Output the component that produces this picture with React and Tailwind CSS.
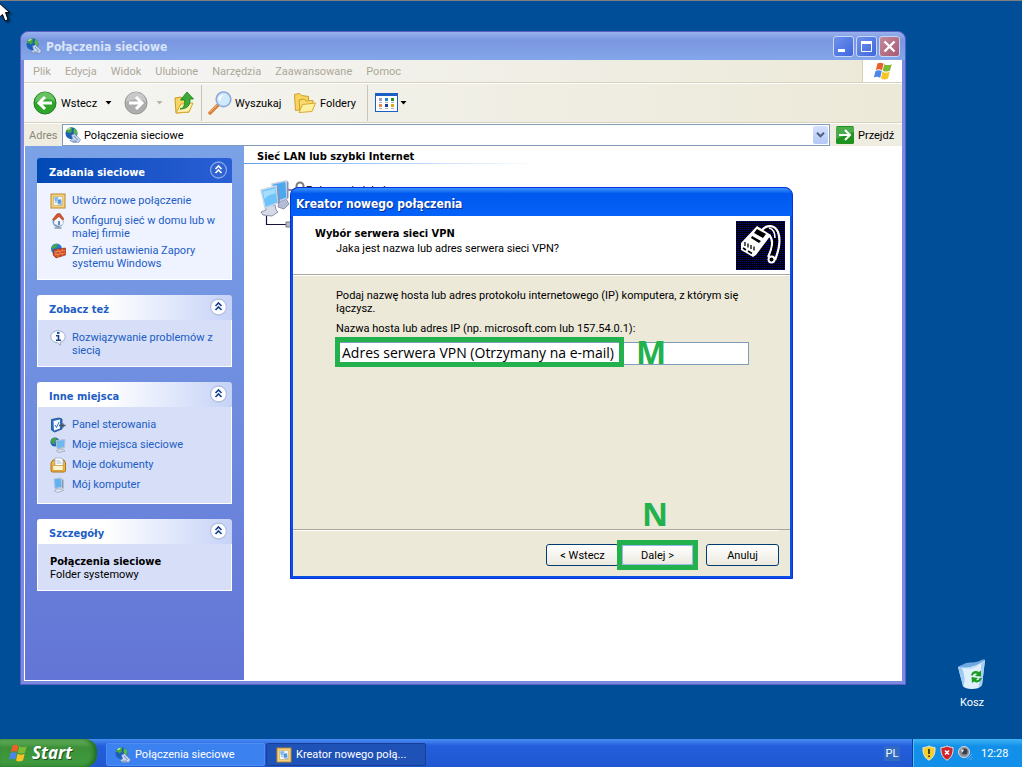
import React from "react";

const menuItems = ["Plik", "Edycja", "Widok", "Ulubione", "Narzędzia", "Zaawansowane", "Pomoc"];

const App = () => {
  return (
    <div className="h-screen min-h-[767px] flex flex-col overflow-hidden bg-[#004e98] border-t border-[#808080] font-[Roboto,sans-serif] text-[11px] leading-[13px] text-black select-none">
      <main className="relative flex-1">
        <ExplorerWindow />
        <WizardDialog />
        <RecycleBin />
        <Cursor />
      </main>
      <Taskbar />
    </div>
  );
};

const ExplorerWindow = () => {
  return (
    <section className="absolute left-5 top-[30px] right-[116px] bottom-[54px] flex flex-col rounded-t-lg border border-[#5a5fc4] bg-[#7a8ae0] px-[3px] pb-[3px]">
      <header className="flex h-7 items-center gap-1 -mx-[3px] rounded-t-lg bg-linear-to-b from-[#98b2ee] via-[#7a96df] via-30% to-[#83a6ea] pl-[5px] pr-[5px]">
        <NetworkIcon className="size-4" />
        <h1 className="grow pt-0.5 font-[DejaVu_Sans_Condensed,sans-serif] text-[12px] font-bold leading-4 text-[#d8e4f8]">Połączenia sieciowe</h1>
        <div className="flex gap-0.5">
          <CaptionButton label="Minimalizuj" kind="min" />
          <CaptionButton label="Maksymalizuj" kind="max" />
          <CaptionButton label="Zamknij" kind="close" />
        </div>
      </header>
      <MenuBar />
      <Toolbar />
      <AddressBar />
      <div className="flex grow border-l border-b border-white bg-white">
        <Sidebar />
        <Connections />
      </div>
    </section>
  );
};

const CaptionButton = ({ label, kind }) => {
  return (
    <button
      aria-label={label}
      className={
        kind === "close"
          ? "flex size-[21px] items-center justify-center rounded-[3px] border border-[#c9d6f6] bg-linear-to-br from-[#c28a9e] to-[#a95a70]"
          : "flex size-[21px] items-center justify-center rounded-[3px] border border-[#c9d6f6] bg-linear-to-br from-[#6f92ec] to-[#3f66dc]"
      }
    >
      <svg viewBox="0 0 19 19" className="size-[19px]" fill="none" stroke="#fff">
        {kind === "min" && <path d="M4 13.500h7" strokeWidth="3" />}
        {kind === "max" && <path d="M4.500 4v10.500h10V4" />}
        {kind === "max" && <path d="M4 5.500h11" strokeWidth="3" />}
        {kind === "close" && <path d="M4.500 4.500l10 10M14.500 4.500l-10 10" strokeWidth="2.400" />}
      </svg>
    </button>
  );
};

const MenuBar = () => {
  return (
    <nav className="flex h-[23px] items-stretch border-b border-[#d8d2bd] bg-linear-to-r from-[#f6f6f8] to-[#ece9d8]">
      <ul className="flex grow items-center gap-3.5 pl-[9px] text-[#aca899]">
        {menuItems.map((item) => (
          <li key={item}>
            <button>{item}</button>
          </li>
        ))}
      </ul>
      <div className="flex w-10 items-center justify-center border-l border-[#d8d2bd] bg-white">
        <WindowsFlag className="size-5" />
      </div>
    </nav>
  );
};

const DropArrow = ({ className }) => (
  <svg viewBox="0 0 7 4" className={"h-1 w-[7px] " + className} fill="currentColor">
    <path d="M.5 0h6L3.500 3.500z" />
  </svg>
);

const Toolbar = () => {
  return (
    <div className="flex h-10 items-center border-t border-b border-t-white border-b-[#d8d2bd] bg-linear-to-r from-[#f5f5f3] to-[#ece9d8] pl-[9px]">
      <button className="flex items-center gap-1">
        <BackIcon />
        <span className="w-10 text-left">Wstecz</span>
        <DropArrow className="text-black" />
      </button>
      <button aria-label="Dalej" className="ml-3 flex items-center gap-2">
        <ForwardIcon />
        <DropArrow className="text-[#b8b5a8]" />
      </button>
      <button aria-label="Do góry" className="ml-2.5">
        <UpFolderIcon />
      </button>
      <div className="ml-1.5 h-9 w-px bg-[#c9c5b2]" />
      <button className="ml-1.5 flex items-center gap-[3px]">
        <SearchIcon />
        <span className="w-[58px] text-left">Wyszukaj</span>
      </button>
      <button className="flex items-center gap-[3px]">
        <FoldersIcon />
        <span className="w-[47px] text-left">Foldery</span>
      </button>
      <div className="h-9 w-px bg-[#c9c5b2]" />
      <button aria-label="Widoki" className="ml-[7px] flex items-center gap-px">
        <ViewsIcon />
        <DropArrow className="text-black" />
      </button>
    </div>
  );
};

const AddressBar = () => {
  return (
    <div className="flex h-[23px] items-stretch border-t border-white bg-[#efede1]">
      <label htmlFor="address" className="flex w-[38px] items-center pl-[5px] text-[#8b8878]">Adres</label>
      <div className="flex grow items-center border border-[#7f9db9] bg-white pl-0.5 pr-px">
        <NetworkIcon className="size-4" />
        <input id="address" className="min-w-0 grow pl-[3px] outline-none" defaultValue="Połączenia sieciowe" />
        <button aria-label="Rozwiń" className="flex h-[18px] w-[15px] items-center justify-center rounded-[2px] bg-linear-to-b from-[#d4e0fc] to-[#b4c8f6]">
          <svg viewBox="0 0 9 6" className="h-1.5 w-[9px]" fill="none" stroke="#4d6185" strokeWidth="2">
            <path d="M1 .8l3.500 3.500L8 .8" />
          </svg>
        </button>
      </div>
      <button className="flex w-[72px] items-center gap-1 pl-1.5">
        <svg viewBox="0 0 18 18" className="size-[18px]">
          <rect width="18" height="18" rx="1.500" fill="#1f921f" />
          <path d="M0 1h18v5L0 13z" fill="#6cc06c" opacity=".55" />
          <path d="M3 9h11M9 4l5 5-5 5" fill="none" stroke="#fff" strokeWidth="2" />
        </svg>
        Przejdź
      </button>
    </div>
  );
};

const Sidebar = () => {
  return (
    <aside className="flex w-[219px] flex-col gap-[15px] bg-linear-to-b from-[#7ba2e7] to-[#6375d6] px-3 pt-3">
      <Panel title="Zadania sieciowe" primary>
        <TaskLink icon={<WizardIcon />}>Utwórz nowe połączenie</TaskLink>
        <TaskLink icon={<HomeNetIcon />}>Konfiguruj sieć w domu lub w małej firmie</TaskLink>
        <TaskLink icon={<FirewallIcon />}>Zmień ustawienia Zapory systemu Windows</TaskLink>
      </Panel>
      <Panel title="Zobacz też">
        <TaskLink icon={<InfoIcon />}>Rozwiązywanie problemów z siecią</TaskLink>
      </Panel>
      <Panel title="Inne miejsca">
        <TaskLink icon={<ControlPanelIcon />}>Panel sterowania</TaskLink>
        <TaskLink icon={<PlacesIcon />}>Moje miejsca sieciowe</TaskLink>
        <TaskLink icon={<DocumentsIcon />}>Moje dokumenty</TaskLink>
        <TaskLink icon={<ComputerIcon />}>Mój komputer</TaskLink>
      </Panel>
      <Panel title="Szczegóły">
        <li className="pt-px">
          <p className="font-[DejaVu_Sans_Condensed,sans-serif] font-bold">Połączenia sieciowe</p>
          <p>Folder systemowy</p>
        </li>
      </Panel>
    </aside>
  );
};

const Panel = ({ title, primary, children }) => {
  return (
    <section>
      <header
        className={
          primary
            ? "flex h-[25px] items-center justify-between rounded-t-[3px] bg-linear-to-r from-[#0049b5] to-[#2a5fd6] pl-3 pr-1 text-white"
            : "flex h-[25px] items-center justify-between rounded-t-[3px] bg-linear-to-r from-white from-35% to-[#c6d3f7] pl-3 pr-1 text-[#215dc6]"
        }
      >
        <h2 className="pt-1 font-[DejaVu_Sans_Condensed,sans-serif] font-bold">{title}</h2>
        <button aria-label="Zwiń">
          <svg viewBox="0 0 19 19" className="size-[19px]" fill="none">
            <circle cx="9.500" cy="9" r="8" fill={primary ? "#2f63cf" : "#fff"} stroke={primary ? "#86a6ea" : "#b3bfe0"} strokeWidth="1.300" />
            <path d="M6.500 8l3-3 3 3M6.500 12l3-3 3 3" stroke={primary ? "#fff" : "#15428b"} strokeWidth="1.600" />
          </svg>
        </button>
      </header>
      <ul
        className={
          primary
            ? "flex flex-col gap-[3px] border border-t-0 border-white bg-[#eff3ff] px-3 pt-2.5 pb-[9px]"
            : "flex flex-col gap-[3px] border border-t-0 border-white bg-[#d6dff7] px-3 pt-2.5 pb-[9px]"
        }
      >
        {children}
      </ul>
    </section>
  );
};

const TaskLink = ({ icon, children }) => {
  return (
    <li>
      <a href="#" className="flex min-h-[17px] items-start gap-1.5 text-[#215dc6]">
        {icon}
        <span className="pt-px">{children}</span>
      </a>
    </li>
  );
};

const Connections = () => {
  return (
    <div className="grow">
      <h2 className="pl-[13px] pt-1 font-[DejaVu_Sans_Condensed,sans-serif] font-bold">Sieć LAN lub szybki Internet</h2>
      <div className="h-px w-[293px] bg-linear-to-r from-[#5a9cf0] to-white" />
      <div className="flex pl-3.5 pt-4">
        <LanIcon />
        <span className="pt-1">Połączenie lokalne</span>
      </div>
    </div>
  );
};

const WizardDialog = () => {
  return (
    <section role="dialog" aria-label="Kreator nowego połączenia" className="absolute left-[290px] top-[186px] flex min-h-[392px] w-[503px] flex-col rounded-t-lg border border-[#0831d9] bg-[#0a4fe8] px-0.5 pb-0.5">
      <header className="-mx-0.5 flex h-7 items-center rounded-t-lg bg-linear-to-b from-[#3d95ff] via-[#0058ee] via-20% to-[#0562f8] pl-[5px]">
        <h1 className="pt-1 font-[DejaVu_Sans_Condensed,sans-serif] text-[12px] font-bold leading-4 text-white [text-shadow:1px_1px_#0a2f8c]">Kreator nowego połączenia</h1>
      </header>
      <div className="flex h-[59px] items-start justify-between border-b border-[#aca899] bg-white pl-[22px] pr-[5px] pt-[5px]">
        <div className="pt-[5px]">
          <h2 className="font-[DejaVu_Sans_Condensed,sans-serif] font-bold leading-4">Wybór serwera sieci VPN</h2>
          <p className="pl-[21px]">Jaka jest nazwa lub adres serwera sieci VPN?</p>
        </div>
        <CableIcon />
      </div>
      <div className="grow border-t border-white bg-[#ece9d8] pl-[43px] pr-[41px] pt-[13px]">
        <p>Podaj nazwę hosta lub adres protokołu internetowego (IP) komputera, z którym się łączysz.</p>
        <label htmlFor="host" className="mt-[7px] block">Nazwa hosta lub adres IP (np. microsoft.com lub 157.54.0.1):</label>
        <div className="relative mt-[7px]">
          <input
            id="host"
            className="h-[23px] w-full border border-[#7f9db9] bg-white px-[5px] pb-0.5 font-[Open_Sans,sans-serif] text-[14px] leading-4 outline-none"
            defaultValue="Adres serwera VPN (Otrzymany na e-mail)"
          />
          <div className="absolute -left-px -top-[5px] h-[30px] w-[289px] border-[5px] border-[#22b14c]" />
          <span className="absolute left-[300px] top-0 font-[Open_Sans,sans-serif] text-[32px] font-bold leading-5 text-[#22b14c]">M</span>
        </div>
      </div>
      <footer className="flex justify-end bg-[#ece9d8] border-t border-[#aca899] pb-2.5 pr-[11px]">
        <div className="flex grow justify-end gap-3 border-t border-white pt-[13px]">
          <div className="flex gap-0.5">
            <button className="h-[22px] w-[73px] rounded-[3px] border border-[#003c74] bg-linear-to-b from-white to-[#eceadf]">&lt; Wstecz</button>
            <div className="relative">
              <button className="h-[22px] w-[73px] rounded-[3px] border-2 border-[#9db8ea] bg-linear-to-b from-white to-[#eceadf]">Dalej &gt;</button>
              <div className="absolute -left-1 -top-1 h-[30px] w-[81px] border-[5px] border-[#22b14c]" />
              <span className="absolute left-[21px] -top-10 font-[Open_Sans,sans-serif] text-[32px] font-bold leading-5 text-[#22b14c]">N</span>
            </div>
          </div>
          <button className="h-[22px] w-[73px] rounded-[3px] border border-[#003c74] bg-linear-to-b from-white to-[#eceadf]">Anuluj</button>
        </div>
      </footer>
    </section>
  );
};

const RecycleBin = () => {
  return (
    <button className="absolute bottom-[30px] right-[34px] flex w-8 flex-col items-center gap-1.5 text-white">
      <svg viewBox="0 0 32 32" className="size-8">
        <path d="M2 9C10 4 20 8 29 2l-3 25c-2 3-6 4-10 4s-8-1-9-3z" fill="#dff0fb" />
        <path d="M2 9l8-4c6-1 11 0 15-3l4-1c-4 6-19 11-27 8z" fill="#6ea9e2" />
        <path d="M4 9c7 1 14 0 20-3-5 5-13 6-20 3z" fill="#b9daf4" />
        <path d="M2 9l5 19c3-4 1-13-1-18z" fill="#9dcaf0" />
        <path d="M29 2l-3 25-4 3c3-8 3-17 3-25z" fill="#a8cff0" />
        <path d="M15 17c1-4 5-5 8-3l2-1.500 0 6-6-.5 2-2c-2-1-4 0-4.500 2zM26 20c-1 4-5 5.500-8 3.500l-2 1.500-.5-6 6.500 1-2 2c1.500.5 3 0 3.500-2z" fill="#1c9a22" />
      </svg>
      Kosz
    </button>
  );
};

const Taskbar = () => {
  return (
    <footer className="flex h-7 shrink-0 items-stretch bg-linear-to-b from-[#4a8df4] via-[#245edb] via-25% to-[#2158d2] text-white">
      <button className="flex w-[97px] items-center gap-1 rounded-r-xl bg-linear-to-b from-[#6cb465] via-[#3c9138] via-30% to-[#409c3f] pl-2 shadow-[inset_-3px_0_4px_#1f6b22]">
        <WindowsFlag className="size-5" />
        <span className="font-[Open_Sans,sans-serif] text-[17px] font-bold italic leading-5 [text-shadow:1px_1px_#1c5220]">Start</span>
      </button>
      <div className="flex grow gap-px pl-[9px] pt-1 pb-px">
        <button className="flex w-[159px] items-center gap-1 rounded-[2px] border border-[#4d8cf2] bg-[#3c81f0] pl-2">
          <NetworkIcon className="size-4" />
          Połączenia sieciowe
        </button>
        <button className="flex w-[160px] items-center gap-1 rounded-[2px] border border-[#163f95] bg-[#1e52b7] pl-[9px]">
          <WizardIcon />
          Kreator nowego połą...
        </button>
      </div>
      <div className="flex w-10 items-center justify-center">
        <span className="bg-[#316ac5] px-0.5 py-px">PL</span>
      </div>
      <div className="flex w-[110px] items-center gap-0.5 border-l border-[#0b3a9c] bg-linear-to-b from-[#3db4f5] via-[#1290e9] via-25% to-[#1290e9] pl-2 shadow-[inset_1px_0_#4cc3fa]">
        <ShieldIcon fill="#f6cf2a">
          <path d="M8 4v5M8 10.500v1.500" stroke="#222" strokeWidth="1.600" />
        </ShieldIcon>
        <ShieldIcon fill="#d3222a">
          <path d="M6 5.500l4 4M10 5.500l-4 4" stroke="#fff" strokeWidth="1.600" />
        </ShieldIcon>
        <svg viewBox="0 0 16 16" className="size-4">
          <circle cx="7" cy="7" r="5.500" fill="#8b9096" stroke="#d8dde2" />
          <circle cx="7.500" cy="6.500" r="3" fill="#3b3f45" />
          <path d="M4 4l3 1-2 3z" fill="#e8ebee" />
          <path d="M10 14l5-5M12.500 15l3-3" stroke="#79a9f0" />
        </svg>
        <time className="pl-1.5">12:28</time>
      </div>
    </footer>
  );
};

const Cursor = () => (
  <svg viewBox="0 0 12 22" className="absolute left-0 top-0 h-[22px] w-3 drop-shadow-[2px_2px_1px_#00000080]">
    <path d="M-3 0L9.500 11.500H5.500L8 18.500L5 20L2.500 13.500L-1 16.500z" fill="#fff" stroke="#000" />
  </svg>
);

/* icons */

const ShieldIcon = ({ fill, children }) => (
  <svg viewBox="0 0 16 16" className="size-4">
    <path d="M8 1c2 1 4 1.500 6 1.500C14.500 9 12 13 8 15.200 4 13 1.500 9 2 2.500 4 2.500 6 2 8 1z" fill={fill} stroke="#e9e6d8" />
    {children}
  </svg>
);

const WindowsFlag = ({ className }) => (
  <svg viewBox="0 0 20 20" className={className}>
    <path d="M4.500 2.500c2-1.300 4-1 6 .2L9 9.300C7 8 5 8 2.800 9z" fill="#e8602a" />
    <path d="M11.200 3.200c2 1.100 4.500 1.200 7.500 0L17 9.800c-2.500 1.200-5 1-7.300-.1z" fill="#7cbb35" />
    <path d="M2.600 10c2-1.200 4-1 6.200.1L7.200 16.800c-2-1.200-4-1.300-6.400-.2z" fill="#4a87e8" />
    <path d="M9.500 10.700c2.200 1.200 4.500 1.300 7.200.1L15 17.600c-2.400 1.200-4.800 1-7-.2z" fill="#f7c423" />
  </svg>
);

const NetworkIcon = ({ className }) => (
  <svg viewBox="0 0 16 16" className={className}>
    <circle cx="6.500" cy="6.200" r="6" fill="#1c5fb8" />
    <path d="M.8 5C1.500 2 4 .2 7.500.4L6.500 3 7 4.500 4.500 6.500 3 5z" fill="#45a838" />
    <path d="M9 1l3 2.500.3 4-2.300.5L8.500 5z" fill="#58b944" />
    <path d="M2 2.800C3 1.400 4.500.8 6 .8L4 3z" fill="#cdeeb4" />
    <path d="M6.500 8l3-1.300 6 6-1.500 2.500-6 .3L5 13.500l2.500-1.500z" fill="#c5d6ee" stroke="#5f7fb0" strokeWidth=".6" />
    <path d="M9 9l3.500 4M7.500 14l4.500.2" stroke="#4a6ba0" strokeWidth=".7" />
  </svg>
);

const BackIcon = () => (
  <svg viewBox="0 0 24 24" className="size-6">
    <circle cx="12" cy="12" r="11" fill="#2fa52c" stroke="#1e7d1f" />
    <path d="M2 11a10 10 0 0 1 20 0c-5-4-13-3-20 0z" fill="#8fd585" opacity=".6" />
    <path d="M19 12H7M12 6l-6 6 6 6" fill="none" stroke="#fff" strokeWidth="3" />
  </svg>
);

const ForwardIcon = () => (
  <svg viewBox="0 0 24 24" className="size-6">
    <circle cx="12" cy="12" r="11" fill="#adadad" stroke="#979797" />
    <path d="M2 11a10 10 0 0 1 20 0c-5-4-13-3-20 0z" fill="#d4d4d4" opacity=".7" />
    <path d="M5 12h12M12 6l6 6-6 6" fill="none" stroke="#fff" strokeWidth="3" />
  </svg>
);

const UpFolderIcon = () => (
  <svg viewBox="0 0 22 24" className="h-6 w-[22px]">
    <path d="M2 7l6-1 2 2 6 .5V21L3 22z" fill="#f6d667" stroke="#c79a22" />
    <path d="M3 22l5-9 12-1-4 9z" fill="#fdf0a8" stroke="#d9a72a" />
    <path d="M7 18c4-1 5-4 4.500-9H7.500l6.500-8 6.500 7h-3.500c.5 6-2.500 10-10 10z" fill="#3bab35" stroke="#1d7a1f" strokeWidth=".8" />
  </svg>
);

const SearchIcon = () => (
  <svg viewBox="0 0 24 24" className="size-6">
    <path d="M2 22l8-8" stroke="#d9803a" strokeWidth="3.500" strokeLinecap="round" />
    <path d="M2 21l7-7" stroke="#f7b377" />
    <circle cx="15.500" cy="8.300" r="7.300" fill="#cfeafc" stroke="#8fa9dc" strokeWidth="1.600" />
    <path d="M10.500 9c0-4 3-5.500 6-5-3 1-4 3-4 6z" fill="#fff" />
  </svg>
);

const FoldersIcon = () => (
  <svg viewBox="0 0 24 24" className="size-6">
    <path d="M1.500 3.500l5-1 2 2 7 1v12l-13 2z" fill="#f7d560" stroke="#cf9f28" />
    <path d="M6 9l5-1 2 2 7-.5v8L7 21z" fill="#f8dc72" stroke="#cf9f28" />
    <path d="M6 21.500l3.500-8L22.500 12 19 20.500z" fill="#fdf0a0" stroke="#dba92c" />
  </svg>
);

const ViewsIcon = () => (
  <svg viewBox="0 0 24 20" className="h-5 w-6">
    <rect x=".5" y=".5" width="22" height="18" fill="#fff" stroke="#1c5fc4" />
    <path d="M0 1.500h23" stroke="#1c5fc4" strokeWidth="3" />
    <path d="M4 5h3v3H4z" fill="#9a9ac8" />
    <path d="M10 5h3v3h-3z" fill="#2a7fd8" />
    <path d="M16 5h3v3h-3z" fill="#249024" />
    <path d="M4 11h3v3H4z" fill="#e88a4a" />
    <path d="M10 11h3v3h-3z" fill="#1c3f9c" />
    <path d="M16 11h3v3h-3z" fill="#d8a818" />
    <path d="M4 9.500h3M10 9.500h3M16 9.500h3M4 15.500h3M10 15.500h3M16 15.500h3" stroke="#b5b5b5" />
  </svg>
);

const WizardIcon = () => (
  <svg viewBox="0 0 16 16" className="size-4 shrink-0">
    <rect x="1" y="1" width="14" height="14" fill="#f3d283" stroke="#b98a2e" />
    <rect x="3.500" y="3.500" width="9" height="9" fill="#eef5fd" stroke="#d3a94c" strokeWidth=".6" />
    <path d="M4 4.500l4-.5.500 3.500-3.500 1z" fill="#7db6ea" />
    <path d="M7 6.500l4-.5.800 4.500-3.800 1z" fill="#4f95da" stroke="#cfe2f5" strokeWidth=".6" />
    <path d="M5 9.500l2-.5M9 12l3-.5" stroke="#9db4cf" />
  </svg>
);

const HomeNetIcon = () => (
  <svg viewBox="0 0 16 16" className="size-4 shrink-0">
    <circle cx="8" cy="8.500" r="5.500" fill="#6c96cc" />
    <path d="M4 6l5-3 4 3.500v5L9 13l-5-2z" fill="#f4f7fb" stroke="#9fb0c6" strokeWidth=".5" />
    <path d="M2.500 6.500L7 .8l3-.3L14 6l-1.500 1L9 3.500 4 7.500z" fill="#d9532c" stroke="#97351c" strokeWidth=".5" />
    <path d="M8 8h2v4H8z" fill="#6c87ae" />
    <path d="M8 13v2M4.500 15h7" stroke="#8a98a8" strokeWidth="1.400" />
  </svg>
);

const FirewallIcon = () => (
  <svg viewBox="0 0 16 16" className="size-4 shrink-0">
    <circle cx="6.500" cy="6" r="5.500" fill="#2a78c9" />
    <path d="M1.500 4.500C3 1.500 6 .5 8 1L6.500 4 3 6z" fill="#46ab3c" />
    <path d="M4 6.500L15.500 5v7L6 15l-3-3z" fill="#cf4a22" stroke="#862a10" strokeWidth=".6" />
    <path d="M4 9l11-1.500M4.500 12L15 10M8 6v3M12 5.500V8M6 9v3M10 8.500V11M8 11.500v3M12.500 10.500v2" stroke="#f0a06a" strokeWidth=".7" />
  </svg>
);

const InfoIcon = () => (
  <svg viewBox="0 0 16 16" className="size-4 shrink-0">
    <path d="M8 .8c4 0 7.200 2.500 7.200 5.900 0 3-2.200 5-5.200 5.700l.5 3-3.300-2.800C3.500 12.300.8 9.900.8 6.700.8 3.300 4 .8 8 .8z" fill="#fff" stroke="#93a3c0" strokeWidth=".9" />
    <path d="M7 2h2.500v2H7z" fill="#1a4fb5" />
    <path d="M6 5.800h2.500V10M6 10.300h5" stroke="#1a3f95" strokeWidth="1.600" fill="none" />
  </svg>
);

const ControlPanelIcon = () => (
  <svg viewBox="0 0 16 16" className="size-4 shrink-0">
    <path d="M1.500 2.500L9 1l3 1v10l-7.500 3-3-2z" fill="#2f6fc4" stroke="#1d4788" strokeWidth=".8" />
    <path d="M3.500 4l6.500-1.500v9l-6 2z" fill="#f6faff" />
    <path d="M5 8l1.500 2.500L9 5" stroke="#2a6fd0" fill="none" />
    <path d="M9 8.500h6.500M13 6.500v4" stroke="#4c5566" strokeWidth="1.400" />
  </svg>
);

const PlacesIcon = () => (
  <svg viewBox="0 0 16 16" className="size-4 shrink-0">
    <circle cx="5" cy="5" r="4.600" fill="#2765b8" />
    <path d="M1 3.500C2.500.5 6 .3 7 1.500L4.500 4.500 5 7 2 6.500z" fill="#43a838" />
    <path d="M6 3.500L15 2.500l-.5 8L7 11.500z" fill="#6fb8f2" stroke="#b5c3d8" />
    <path d="M8 12h5l2 2-6 1.500-2.500-1.500z" fill="#d6dde7" stroke="#8794a8" strokeWidth=".6" />
  </svg>
);

const DocumentsIcon = () => (
  <svg viewBox="0 0 16 16" className="size-4 shrink-0">
    <path d="M1 6l2-3h11l1.500 3v8l-1 1H2l-1-1z" fill="#f0b640" stroke="#a9741a" />
    <path d="M5 1h6l2 2v6H5z" fill="#fff" stroke="#8aa0c0" strokeWidth=".7" />
    <path d="M6.500 4h4M6.500 6h5" stroke="#8aaad8" strokeWidth=".8" />
    <path d="M2.500 8.500h11l-.5 5H3z" fill="#fdf3cf" stroke="#c9942a" strokeWidth=".7" />
  </svg>
);

const ComputerIcon = () => (
  <svg viewBox="0 0 16 16" className="size-4 shrink-0">
    <path d="M4 2l7-1 1 9-7 1.500z" fill="#5eb2f2" stroke="#b5c3d8" />
    <path d="M12 2l1.500 1v9L12 11z" fill="#8c9ab0" />
    <path d="M6 12h5l2.500 1.500-6 2L4.500 14z" fill="#e1e6ee" stroke="#8a96a8" strokeWidth=".6" />
  </svg>
);

const LanIcon = () => (
  <svg viewBox="0 0 48 50" className="h-[50px] w-12">
    <path d="M28 10h12M8.500 36v8.500H30" fill="none" stroke="#1a1040" strokeWidth="1.200" />
    <path d="M28 42h8v5h-8z" fill="#b6bcc6" stroke="#6f7788" />
    <path d="M21 22l7-3 3 5-5 5-6-2z" fill="#b4bbd2" stroke="#8a93ab" />
    <path d="M14 4l14-3 1 17-11 4z" fill="#4aa8f0" stroke="#c2cde4" strokeWidth="1.500" />
    <path d="M29 1l1.500 1v16L29 19z" fill="#8593b8" />
    <path d="M8 27l9-2 1 5 2 2-6 4-9-1-2-3 5-2z" fill="#d6dae6" stroke="#8a93ab" />
    <path d="M3 10l15-4 2 17-13 5z" fill="#6cc4fa" stroke="#cdd7ea" strokeWidth="1.500" />
    <path d="M5 11.500l12-3 .5 5C13 14 9 16 6.500 19z" fill="#a5defd" />
    <path d="M19 6l1.500 1L22 23l-2 1z" fill="#8593b8" />
    <circle cx="42" cy="6" r="3.500" fill="none" stroke="#7c7c7c" strokeWidth="2" />
    <path d="M37 7.500h10V13H37z" fill="#e8932e" />
  </svg>
);

const CableIcon = () => (
  <svg viewBox="0 0 49 49" className="size-[49px]" fill="none">
    <defs>
      <pattern id="dither" width="2" height="2" patternUnits="userSpaceOnUse">
        <rect width="2" height="2" fill="#000" />
        <rect width="1" height="1" fill="#0000a0" />
      </pattern>
    </defs>
    <rect width="49" height="49" fill="url(#dither)" />
    <path d="M26 9c5-6 13-5 16 2 3 8 1 18-3 28" stroke="#fff" strokeWidth="2.200" />
    <path d="M33 14c5 5 3 14-1 22" stroke="#fff" strokeWidth="2.200" />
    <path d="M30 9c5-2 9 1 9 8 0 8-2 13-4 20" stroke="#000" strokeWidth="2.500" />
    <path d="M33 7c4 1 6 4 6 10" stroke="#fff" strokeWidth="1.500" />
    <circle cx="35.500" cy="38.500" r="3" fill="#000" stroke="#fff" strokeWidth="2" />
    <path d="M5 22L21 5l14 9-15 20-3 2-12-7z" fill="#fff" />
    <path d="M21 8l9 5-3 4-9-5zM16 15l9 5-2 2-8-5z" fill="#000" />
    <path d="M9 21v4M12 22.500v4M15 24v4M18 25.500v4" stroke="#000" strokeWidth="1.300" />
    <path d="M7 27l3 2M12 30l4 2.500" stroke="#000" strokeWidth="1.600" />
  </svg>
);

export default App;
